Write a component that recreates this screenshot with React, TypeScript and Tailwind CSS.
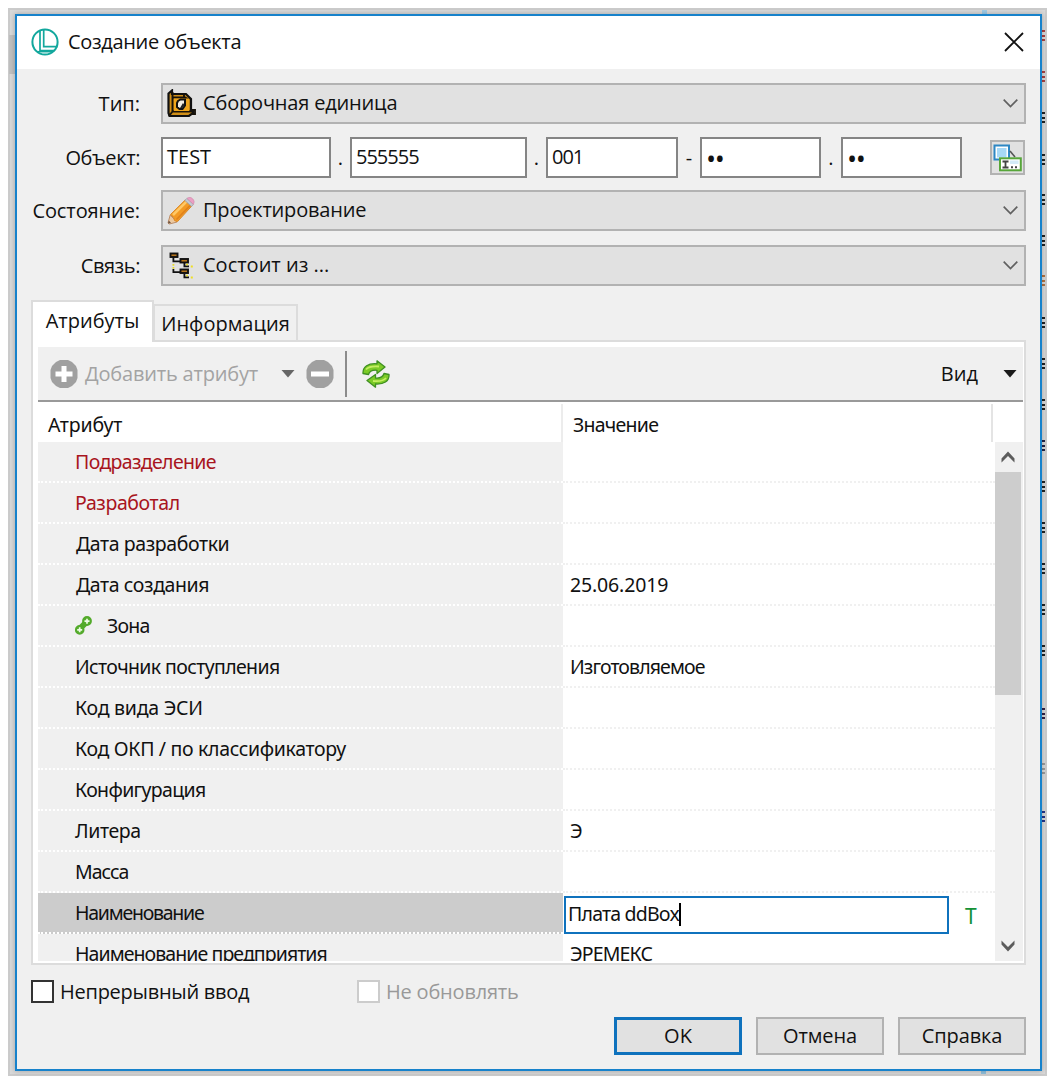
import type { ReactNode } from 'react';

const UI = "font-['Open_Sans','Noto_Sans',sans-serif]";
const GRID = "font-['Noto_Sans','Open_Sans',sans-serif]";

function LogoIcon() {
  return (
    <svg width="28" height="29" viewBox="0 0 28 29" fill="none" stroke="#12a79d" strokeWidth="2">
      <circle cx="14" cy="14" r="12.600" />
      <path d="M9 3V22.500H24M12.700 2V18.700H26.500" strokeWidth="1.700" />
      <path d="M6 23.700H22" strokeWidth="1.500" />
    </svg>
  );
}

function AssemblyIcon() {
  return (
    <svg width="30" height="29" viewBox="0 0 30 29">
      <path d="M1.500 4.500L5 1.500V5h14l5 5v11h2v3l-4 3H2.500L1.500 24z" fill="#d08f18" stroke="#111" strokeWidth="2.200" />
      <path d="M5.500 3v19.500L2 27M5.500 22.500H25M6 8.500h12l4 2M17 5v3M25 21h3v4h-4" fill="none" stroke="#17120a" strokeWidth="1.900" />
      <rect x="7" y="9.500" width="15" height="12.500" fill="#efa51b" />
      <path d="M11 12l2.500-1.500H18v6L15.500 20h-3L10 18v-4z" fill="#f2ede2" stroke="#111" strokeWidth="2" />
      <path d="M16 14l-3 5h2.500l2-3z" fill="#222" />
    </svg>
  );
}

function PencilIcon() {
  return (
    <svg width="28" height="28" viewBox="0 0 28 28">
      <path d="M1 26l2.200-8L7 22l3 3-7.500 2z" fill="#ecc9a0" stroke="#bd8d68" strokeWidth="1" />
      <path d="M3.400 17.600L18 3.200l6.600 6L10.500 24.600l-3-1-.8-3z" fill="#f39a24" stroke="#d98a2b" strokeWidth="1" />
      <path d="M6 18L19.500 4.600" stroke="#ffc866" strokeWidth="2.500" />
      <path d="M9.500 22.500L23 8.600" stroke="#e0811b" strokeWidth="1.600" />
      <path d="M17.800 3.400l2-2 6.600 6-1.900 2z" fill="#c5c9d0" stroke="#9a9ea5" strokeWidth=".8" />
      <path d="M20 1.300C22 0 24 .2 25.500 1.700c1.800 1.800 2 3.700.8 5.600z" fill="#eb9fc4" stroke="#d48fb0" strokeWidth=".8" />
      <path d="M1 26.500l.8-3L4 26z" fill="#6a5140" />
    </svg>
  );
}

function TreeIcon() {
  return (
    <svg width="28" height="28" viewBox="0 0 28 28">
      <path d="M5.500 5h1.800v3.500H14v1.800H5.500zM5.500 17h1.800v2.200H14V21H5.500z" fill="#111" />
      <path d="M5.500 12h1.800v1.800H5.500zM5.500 15h1.800v1.800H5.500z" fill="#e8da2a" />
      <g fill="#b5741c" stroke="#111" strokeWidth="1.900">
        <rect x="3.500" y="1.500" width="7" height="3.500" />
        <rect x="13.500" y="7" width="7.500" height="3.500" />
        <rect x="13.500" y="17.500" width="7.500" height="3.500" />
      </g>
      <path d="M16.500 11h1.800v2.500H22v1.800h-5.500zM16.500 22h1.800v2.500H22v1.800h-5.500z" fill="#111" />
      <path d="M19 11.800h2v1.500h-2zM23.800 13.500h2v1.900h-2zM19 22.800h2v1.500h-2zM23.800 24.500h2v1.900h-2z" fill="#efdf20" />
    </svg>
  );
}

function TemplateIcon() {
  return (
    <svg width="29" height="28" viewBox="0 0 29 28">
      <rect x="1.500" y="1.500" width="14.500" height="14" fill="#fff" stroke="#2d87c4" strokeWidth="2" />
      <rect x="4" y="4" width="9.500" height="9.500" fill="#a6d8f6" />
      <path d="M17 7l5 6" stroke="#555" strokeWidth="1.600" />
      <rect x="7" y="14.300" width="20.800" height="12" fill="#fff" stroke="#57a63a" strokeWidth="2" />
      <rect x="17" y="16.500" width="8.500" height="3.500" fill="#d3ebf8" />
      <path d="M9.500 17.500h6M12.500 17.500v6M9.500 23.500h6" stroke="#444" strokeWidth="1.800" />
      <path d="M18 22.300h2v2h-2zM22 22.300h2v2h-2z" fill="#444" />
    </svg>
  );
}

function RoundIcon({ plus = false }: { plus?: boolean }) {
  return (
    <svg width="28" height="30" viewBox="0 0 28 30">
      <path d="M10 1h8l4 2 4 4 1.500 4v8L26 23l-4 4-4 2h-8l-4-2-4-4-1.500-4v-8L2 7l4-4z" fill="#a0a0a0" />
      {plus ? (
        <path d="M11.500 7h5v5.500h6v5h-6V23h-5v-5.500h-6v-5h6z" fill="#fff" />
      ) : (
        <rect x="5" y="12.500" width="18" height="5" fill="#fff" />
      )}
    </svg>
  );
}

function RefreshIcon() {
  return (
    <svg width="28" height="28" viewBox="0 0 28 28" fill="#7ccb27" stroke="#3f8f22" strokeWidth="1.300" strokeLinejoin="round">
      <path d="M1 13.500C.5 6.500 6.500 3 15 3.800V.8L23 7l-8 6.500v-3.200C10 9.800 7.500 11 6.500 14.500z" />
      <path d="M27 14.500c.5 7-5.500 10-13.500 9.500v3.200L5 20.500l8.500-6V18c5 .5 7.500-1 8.500-4.500z" />
      <path d="M4 9.500C6.500 6.500 10.500 6 17 6.500M24 18c-2.500 3-6.500 3.600-13 3" fill="none" stroke="#c5ee62" strokeWidth="1.800" />
    </svg>
  );
}

function LinkIcon() {
  return (
    <svg width="17" height="19" viewBox="0 0 17 19" fill="none" stroke="#53aa2b" strokeWidth="2.400">
      <path d="M5 12.500L11.500 6" strokeWidth="6" />
      <circle cx="12" cy="5" r="3.700" fill="#5fb336" />
      <circle cx="4.700" cy="13.900" r="3.600" fill="#5fb336" />
      <path d="M9.500 5.200h5M12 2.700v5M2.200 13.800h5M4.700 11.300v5" stroke="#eefbe6" strokeWidth="1.700" />
    </svg>
  );
}

function Chevron() {
  return (
    <svg width="15" height="9" viewBox="0 0 15 9" fill="none" stroke="#606060" strokeWidth="1.700">
      <path d="M.7.7l6.800 6.800L14.300.7" />
    </svg>
  );
}

function ScrollArrow({ down = false }: { down?: boolean }) {
  return (
    <svg width="14" height="12" viewBox="0 0 14 12" fill="#5c5c5c">
      {down ? <path d="M.5 .5v4L7 11.500 13.500 4.500V.5L7 7z" /> : <path d="M.5 11.500V7.500L7 .5 13.500 7.500v4L7 5z" />}
    </svg>
  );
}

function Triangle({ color }: { color: string }) {
  return (
    <svg width="14" height="8" viewBox="0 0 14 8">
      <path d="M.5 0h13L7 7.500z" fill={color} />
    </svg>
  );
}

function Combo({ label, labelClass, icon, text, textClass, className }: {
  label: string; labelClass: string; icon: ReactNode; text: string; textClass: string; className: string;
}) {
  return (
    <div className={`flex items-center ${className}`}>
      <div className="flex w-[144px] shrink-0 justify-end pt-px pr-[21px]">
        <span className={labelClass}>{label}</span>
      </div>
      <div className="flex h-[41px] w-[865px] items-center border-2 border-[#b2b2b2] bg-[#e1e1e1] pr-[6px] pl-1">
        <span className="flex w-[36px] shrink-0 items-center">{icon}</span>
        <span className={`grow pb-[2px] ${textClass}`}>{text}</span>
        <Chevron />
      </div>
    </div>
  );
}

const field = 'h-[41px] shrink-0 overflow-hidden border-2 border-[#858585] bg-white pl-1';

type Row = { name: string; cls: string; value?: string; valueCls?: string; red?: boolean; link?: boolean };

const rows: Row[] = [
  { name: 'Подразделение', cls: 'tracking-[-0.65px]', red: true },
  { name: 'Разработал', cls: 'tracking-[-0.4px]', red: true },
  { name: 'Дата разработки', cls: 'pl-px tracking-[-0.4px]' },
  { name: 'Дата создания', cls: 'pl-px tracking-[-0.4px]', value: '25.06.2019', valueCls: 'tracking-[-0.15px]' },
  { name: 'Зона', cls: 'tracking-[-0.8px]', link: true },
  { name: 'Источник поступления', cls: 'tracking-[-0.62px]', value: 'Изготовляемое', valueCls: 'tracking-[-0.9px]' },
  { name: 'Код вида ЭСИ', cls: 'tracking-[-0.25px]' },
  { name: 'Код ОКП / по классификатору', cls: 'tracking-[-0.33px]' },
  { name: 'Конфигурация', cls: 'tracking-[-0.65px]' },
  { name: 'Литера', cls: 'tracking-[-0.4px]', value: 'Э' },
  { name: 'Масса', cls: 'tracking-[-1px]' },
  { name: 'Наименование', cls: 'tracking-[-1.25px]' },
  { name: 'Наименование предприятия', cls: 'tracking-[-0.92px]', value: 'ЭРЕМЕКС', valueCls: 'tracking-[-0.85px]' },
];

function AttributeRow({ row, selected }: { row: Row; selected: boolean }) {
  return (
    <div className="flex h-[41px] shrink-0">
      <div className={`flex w-[525px] shrink-0 items-center border-b-2 border-dotted border-white pl-[37px] ${selected ? 'bg-[#cccccc]' : 'bg-[#f0f0f0]'}`}>
        {row.link && <span className="mr-[15px]"><LinkIcon /></span>}
        <span className={`whitespace-nowrap ${row.cls} ${row.red ? 'text-[#a81420]' : ''}`}>{row.name}</span>
      </div>
      {selected ? (
        <div className="flex grow items-start pt-[3px] pl-px">
          <div className="flex h-[38px] w-[385px] shrink-0 items-center border-2 border-[#0f72bd] bg-white pb-[2px] pl-[2px]">
            <span className="whitespace-nowrap tracking-[-0.8px]">Плата ddBox</span>
            <span className="h-[23px] w-[2px] bg-black" />
          </div>
          <span className="pl-[16px] text-[21px] leading-[40px] text-[#149136]">T</span>
        </div>
      ) : (
        <div className="flex grow items-center border-b-2 border-dotted border-[#f0f0f0] pl-[7px]">
          <span className={`whitespace-nowrap ${row.valueCls ?? ''}`}>{row.value}</span>
        </div>
      )}
    </div>
  );
}

const marks = [
  [36, 'bg-[#a84040]'], [77, 'bg-[#a84040]'], [118, 'bg-[#222]'], [160, 'bg-[#222]'], [200, 'bg-[#222]'], [241, 'bg-[#222]'],
  [281, 'bg-[#b07040]'], [323, 'bg-[#222]'], [364, 'bg-[#222]'], [405, 'bg-[#222]'], [446, 'bg-[#224]'], [487, 'bg-[#222]'],
  [528, 'bg-[#222]'], [569, 'bg-[#222]'], [610, 'bg-[#222]'], [651, 'bg-[#222]'], [714, 'bg-[#324]'], [769, 'bg-[#999]'], [817, 'bg-[#238]'],
] as const;

export default function App() {
  return (
    <div className={`relative h-[1081px] w-[1054px] overflow-hidden bg-white pt-[8px] pl-[8px] text-[20px] text-[#111] ${UI}`}>
      <div className="h-[1068px] w-[1039px] border-2 border-[#cbcbcb] bg-[#d8d8d8] pt-[4px] pl-[5px]">
        <div className="relative z-10 flex h-[1057px] w-[1027px] flex-col border-2 border-[#1782cb] bg-[#f0f0f0] shadow-[0_0_5px_rgba(0,0,0,0.25)]">
          <header className="flex h-[53px] shrink-0 items-center bg-white pr-[16px] pl-[14px]">
            <LogoIcon />
            <span className="grow pb-px pl-[9px] tracking-[-0.33px] whitespace-nowrap">Создание объекта</span>
            <svg className="mb-[2px]" width="20" height="20" viewBox="0 0 20 20" stroke="#111" strokeWidth="1.800">
              <path d="M1 1l18 18M19 1L1 19" />
            </svg>
          </header>

          <Combo className="mt-[14px]" label="Тип:" labelClass="" icon={<AssemblyIcon />} text="Сборочная единица" textClass="tracking-[-0.18px]" />

          <div className="mt-[13px] flex h-[41px] items-center">
            <div className="flex w-[144px] shrink-0 justify-end pt-px pr-[21px]">
              <span className="tracking-[-0.4px]">Объект:</span>
            </div>
            <div className={`${field} w-[170px] leading-[35px]`}>TEST</div>
            <span className="w-[19px] text-center">.</span>
            <div className={`${field} w-[177px] leading-[35px] tracking-[-1px]`}>555555</div>
            <span className="w-[19px] text-center">.</span>
            <div className={`${field} w-[132px] leading-[35px] tracking-[-1px]`}>001</div>
            <span className="w-[22px] text-center">-</span>
            <div className={`${field} w-[121px] text-[27px] leading-[39px] tracking-[-1.3px]`}>••</div>
            <span className="w-[20px] text-center">.</span>
            <div className={`${field} w-[121px] text-[27px] leading-[39px] tracking-[-1.3px]`}>••</div>
            <div className="ml-[28px] flex size-[35px] items-center justify-center border-2 border-[#b2b2b2] bg-[#e1e1e1]">
              <TemplateIcon />
            </div>
          </div>

          <Combo className="mt-[12px]" label="Состояние:" labelClass="tracking-[-0.1px]" icon={<PencilIcon />} text="Проектирование" textClass="tracking-[-0.2px]" />
          <Combo className="mt-[14px]" label="Связь:" labelClass="tracking-[-0.45px]" icon={<TreeIcon />} text="Состоит из ..." textClass="" />

          <div className="mt-[14px] ml-[14px] flex h-[40px] shrink-0 items-end">
            <div className="z-10 -mb-[2px] flex h-[42px] w-[123px] justify-center border-2 border-b-0 border-[#dcdcdc] bg-white leading-[38px]">
              <span>Атрибуты</span>
            </div>
            <div className="-ml-px flex h-[36px] w-[145px] justify-center border-2 border-b-0 border-[#dcdcdc] leading-[35px]">
              <span>Информация</span>
            </div>
          </div>

          <section className="ml-[14px] flex h-[625px] w-[995px] shrink-0 flex-col border-2 border-[#dcdcdc] bg-white pt-[5px] pl-[5px]">
            <div className="mr-px flex h-[55px] shrink-0 items-center border-b-2 border-[#999] bg-[#f0f0f0] pr-[6px] pl-[12px]">
              <RoundIcon plus />
              <span className="w-[203px] pl-[7px] tracking-[-0.2px] whitespace-nowrap text-[#a3a3a3]">Добавить атрибут</span>
              <span className="mr-[11px]"><Triangle color="#666" /></span>
              <RoundIcon />
              <span className="mr-[12px] ml-[11px] h-[46px] w-[2px] bg-[#8c8c8c]" />
              <span className="ml-[3px]"><RefreshIcon /></span>
              <span className="mr-[25px] ml-auto">Вид</span>
              <Triangle color="#1a1a1a" />
            </div>

            <div className={`flex h-[40px] shrink-0 text-[19.5px] ${GRID}`}>
              <div className="mt-[2px] w-[525px] border-r-2 border-[#ececec] pl-[10px] leading-[41px] tracking-[-0.1px]">Атрибут</div>
              <div className="mt-[2px] w-[430px] border-r-2 border-[#e4e4e4] pl-[10px] leading-[41px] tracking-[-0.75px]">Значение</div>
            </div>

            <div className={`flex h-[519px] text-[19.5px] ${GRID}`}>
              <div className="flex w-[957px] shrink-0 flex-col overflow-hidden">
                {rows.map((row) => (
                  <AttributeRow key={row.name} row={row} selected={row.name === 'Наименование'} />
                ))}
              </div>
              <div className="flex w-[28px] flex-col bg-[#f0f0f0]">
                <div className="flex h-[30px] shrink-0 items-center justify-center pr-[2px]"><ScrollArrow /></div>
                <div className="h-[223px] w-[26px] bg-[#cdcdcd]" />
                <div className="mt-auto flex h-[30px] items-center justify-center pr-[2px]"><ScrollArrow down /></div>
              </div>
            </div>
          </section>

          <div className="mt-[15px] ml-[14px] flex h-[23px] shrink-0 items-center">
            <span className="size-[23px] border-2 border-[#333] bg-white" />
            <span className="w-[303px] pl-[6px] tracking-[-0.25px]">Непрерывный ввод</span>
            <span className="size-[23px] border-2 border-[#ccc] bg-white" />
            <span className="pl-[6px] tracking-[-0.2px] text-[#999]">Не обновлять</span>
          </div>

          <div className="mt-[14px] mr-[14px] flex shrink-0 justify-end gap-[14px]">
            <button className="h-[38px] w-[128px] border-[3px] border-[#0f72bd] bg-[#e1e1e1]">OK</button>
            <button className="h-[38px] w-[128px] border-2 border-[#b2b2b2] bg-[#e1e1e1] tracking-[-0.1px]">Отмена</button>
            <button className="h-[38px] w-[128px] border-2 border-[#b2b2b2] bg-[#e1e1e1] tracking-[-0.1px]">Справка</button>
          </div>
        </div>
      </div>
      <span className="absolute top-[35px] left-[9px] h-[39px] w-[6px] bg-[#bfbfbf]" />
      <span className="absolute top-[10px] left-[982px] h-[4px] w-[5px] bg-[#9fcbe6]" />
      <span className="absolute top-[1071px] left-[981px] h-[3px] w-[5px] bg-[#8fbfdc]" />
      {marks.map(([y, color]) => (
        <span key={y} className="absolute left-[1042px] flex h-[11px] w-[3px] flex-col justify-between" style={{ top: y - 6 }}>
          <span className={`h-[2px] ${color}`} />
          <span className={`h-[2px] ${color}`} />
          <span className={`h-[2px] ${color}`} />
        </span>
      ))}
    </div>
  );
}
